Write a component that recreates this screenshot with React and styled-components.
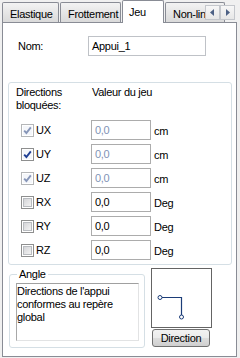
import styled, { createGlobalStyle } from "styled-components";

const GlobalStyle = createGlobalStyle`
  * { box-sizing: border-box; }
  body {
    margin: 0;
    background: #f0f0f0;
    font-family: "Liberation Sans", Arial, sans-serif;
    font-size: 11px;
    letter-spacing: -0.3px;
    color: #000;
  }
`;

const tabs = [
  { label: "Elastique", width: 57 },
  { label: "Frottement", width: 61 },
  { label: "Jeu", width: 42, active: true },
  { label: "Non-linéaire", width: 60 },
];

const rows = [
  { name: "UX", unit: "cm", checked: true, disabled: true },
  { name: "UY", unit: "cm", checked: true, disabled: false, dimValue: true },
  { name: "UZ", unit: "cm", checked: true, disabled: true },
  { name: "RX", unit: "Deg" },
  { name: "RY", unit: "Deg" },
  { name: "RZ", unit: "Deg" },
];

function CheckBox({ checked, disabled }) {
  return (
    <Box $disabled={disabled}>
      <BoxInner $checked={checked}>
        {checked && (
          <svg width="9" height="9" viewBox="0 0 9 9">
            <path
              d="M1.2 4.6 L3.4 7 L7.8 1.4"
              fill="none"
              stroke={disabled ? "#8796b8" : "#1f3f94"}
              strokeWidth="1.9"
            />
          </svg>
        )}
      </BoxInner>
    </Box>
  );
}

export default function App() {
  return (
    <Window>
      <GlobalStyle />
      <TabStrip>
        {tabs.map((t) => (
          <Tab key={t.label} $active={t.active} style={{ width: t.width }}>
            {t.label}
          </Tab>
        ))}
        <Scroller>
          <ArrowButton>
            <svg width="5" height="7" viewBox="0 0 5 7">
              <path d="M4 0 L0 3.5 L4 7 Z" fill="#4d6185" />
            </svg>
          </ArrowButton>
          <ArrowButton>
            <svg width="5" height="7" viewBox="0 0 5 7">
              <path d="M1 0 L5 3.5 L1 7 Z" fill="#4d6185" />
            </svg>
          </ArrowButton>
        </Scroller>
      </TabStrip>

      <Panel>
        <NomRow>
          <NomLabel>Nom:</NomLabel>
          <NomInput>Appui_1</NomInput>
        </NomRow>

        <Group>
          <Grid>
            <HeadCell>
              Directions
              <br />
              bloquées:
            </HeadCell>
            <HeadCell $wide>Valeur du jeu</HeadCell>
            {rows.map((r) => (
              <Row key={r.name}>
                <CheckCell>
                  <CheckBox checked={r.checked} disabled={r.disabled} />
                  <CheckLabel>{r.name}</CheckLabel>
                </CheckCell>
                <ValueBox $dim={r.checked}>0,0</ValueBox>
                <Unit>{r.unit}</Unit>
              </Row>
            ))}
          </Grid>
        </Group>

        <BottomRow>
          <AngleSet>
            <AngleLegend>Angle</AngleLegend>
            <AngleText>
              Directions de l'appui
              <br />
              conformes au repère
              <br />
              global
            </AngleText>
          </AngleSet>
          <DirectionCol>
            <Preview>
              <svg width="59" height="58" viewBox="0 0 59 58">
                <path
                  d="M10 28.5 H29.5 V47"
                  fill="none"
                  stroke="#1c3d78"
                  strokeWidth="1.2"
                />
                <circle cx="8" cy="28.5" r="2" fill="#fff" stroke="#1c3d78" />
                <circle cx="29.5" cy="48" r="2" fill="#fff" stroke="#1c3d78" />
              </svg>
            </Preview>
            <PushButton>Direction</PushButton>
          </DirectionCol>
        </BottomRow>
      </Panel>
    </Window>
  );
}

const Window = styled.div`
  width: 240px;
  height: 358px;
  background: #f0f0f0;
`;

const TabStrip = styled.div`
  position: relative;
  display: flex;
  align-items: flex-end;
  height: 22px;
  padding-left: 2px;
  gap: 1px;
`;

const Tab = styled.div`
  position: relative;
  z-index: ${(p) => (p.$active ? 2 : 0)};
  flex: none;
  height: ${(p) => (p.$active ? "23px" : "20px")};
  margin-bottom: ${(p) => (p.$active ? "-1px" : "0")};
  padding: 5px 0 0 ${(p) => (p.$active ? "6px" : "7px")};
  overflow: hidden;
  white-space: nowrap;
  border: 1px solid #898c95;
  border-bottom: none;
  border-radius: 2px 2px 0 0;
  background: ${(p) =>
    p.$active ? "#fff" : "linear-gradient(#f3f3f3, #e6e6e6 50%, #dadada)"};
  line-height: 13px;
`;

const Scroller = styled.div`
  position: absolute;
  top: 5px;
  left: 205px;
  z-index: 3;
  display: flex;
`;

const ArrowButton = styled.div`
  width: 15px;
  height: 15px;
  display: flex;
  align-items: center;
  justify-content: center;
  border: 1px solid #c4c7cc;
  background: linear-gradient(#f7f7f7, #e7e7e7);
`;

const Panel = styled.div`
  position: relative;
  z-index: 1;
  margin: 0 3px 0 2px;
  height: 335px;
  border: 1px solid #898c95;
  background: #fff;
  display: flex;
  flex-direction: column;
`;

const NomRow = styled.div`
  display: flex;
  align-items: center;
  margin: 13px 0 0 15px;
  height: 20px;
`;

const NomLabel = styled.div`
  width: 70px;
  line-height: 13px;
`;

const NomInput = styled.div`
  width: 118px;
  height: 20px;
  padding: 2px 0 0 3px;
  border: 1px solid #bfc2c7;
  line-height: 14px;
`;

const Group = styled.div`
  margin: 26px 4px 0 5px;
  padding: 3px 0 4px 7px;
  border: 1px solid #d5dfe5;
  border-radius: 3px;
`;

const Grid = styled.div`
  display: grid;
  grid-template-columns: 72px 60px auto;
  column-gap: 3px;
  row-gap: 4px;
  line-height: 13px;
`;

const HeadCell = styled.div`
  grid-column: ${(p) => (p.$wide ? "2 / span 2" : "1")};
  margin-bottom: 4px;
  padding-left: ${(p) => (p.$wide ? "1px" : "0")};
  white-space: nowrap;
`;

const Row = styled.div`
  display: contents;
`;

const CheckCell = styled.div`
  display: flex;
  align-items: center;
  padding-left: 5px;
`;

const Box = styled.span`
  width: 13px;
  height: 13px;
  padding: 1px;
  border: 1px solid ${(p) => (p.$disabled ? "#b4b6b8" : "#8e8f8f")};
  background: #fff;
  display: flex;
`;

const BoxInner = styled.span`
  flex: 1;
  display: flex;
  align-items: center;
  justify-content: center;
  border: 1px solid ${(p) => (p.$checked ? "transparent" : "#b9bcc0")};
  background: ${(p) =>
    p.$checked ? "#f4f6fa" : "linear-gradient(135deg, #d4d5d8, #f3f3f3)"};
  & svg {
    margin: -1px;
  }
`;

const CheckLabel = styled.span`
  margin-left: 2px;
`;

const ValueBox = styled.div`
  height: 20px;
  padding: 3px 0 0 3px;
  border: 1px solid #acacac;
  color: ${(p) => (p.$dim ? "#7f93b6" : "#000")};
`;

const Unit = styled.div`
  padding-top: 5px;
`;

const BottomRow = styled.div`
  display: flex;
  gap: 6px;
  margin-top: 3px;
  padding-left: 6px;
`;

const AngleSet = styled.fieldset`
  width: 136px;
  height: 80px;
  margin: 0;
  padding: 2px 5px 5px 6px;
  border: 1px solid #d5dfe5;
  border-radius: 3px;
  min-width: 0;
`;

const AngleLegend = styled.legend`
  margin-left: 1px;
  padding: 0 2px;
  line-height: 13px;
`;

const AngleText = styled.div`
  height: 58px;
  padding: 1px 0 0 0;
  border: 1px solid #e2e3e4;
  border-top-color: #a0a0a0;
  border-left-color: #a8a8a8;
  line-height: 13px;
`;

const DirectionCol = styled.div`
  display: flex;
  flex-direction: column;
  gap: 1px;
  width: 61px;
`;

const Preview = styled.div`
  height: 60px;
  border: 1px solid #646464;
  background: #fff;
`;

const PushButton = styled.div`
  width: 58px;
  height: 18px;
  margin-left: 1px;
  border: 1px solid #707070;
  border-radius: 3px;
  background: linear-gradient(#f2f2f2, #ebebeb 50%, #dddddd 51%, #cfcfcf);
  text-align: center;
  line-height: 16px;
`;
